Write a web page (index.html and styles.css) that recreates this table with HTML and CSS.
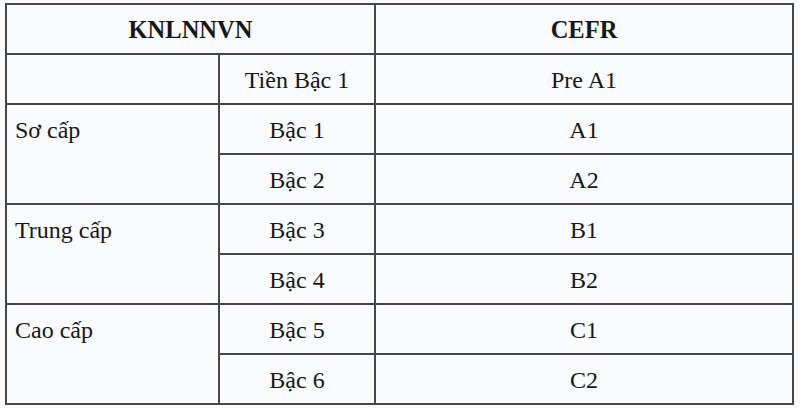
FILE: index.html
```html
<!DOCTYPE html>
<html lang="vi">
<head>
<meta charset="utf-8">
<title>KNLNNVN – CEFR</title>
<link rel="stylesheet" href="styles.css">
</head>
<body>
<table class="levels">
  <colgroup>
    <col class="c1">
    <col class="c2">
    <col class="c3">
  </colgroup>
  <thead>
    <tr>
      <th colspan="2">KNLNNVN</th>
      <th>CEFR</th>
    </tr>
  </thead>
  <tbody>
    <tr>
      <td class="group"></td>
      <td class="mid">Tiền Bậc 1</td>
      <td class="mid">Pre A1</td>
    </tr>
    <tr>
      <td class="group" rowspan="2">Sơ cấp</td>
      <td class="mid">Bậc 1</td>
      <td class="mid">A1</td>
    </tr>
    <tr>
      <td class="mid">Bậc 2</td>
      <td class="mid">A2</td>
    </tr>
    <tr>
      <td class="group" rowspan="2">Trung cấp</td>
      <td class="mid">Bậc 3</td>
      <td class="mid">B1</td>
    </tr>
    <tr>
      <td class="mid">Bậc 4</td>
      <td class="mid">B2</td>
    </tr>
    <tr>
      <td class="group" rowspan="2">Cao cấp</td>
      <td class="mid">Bậc 5</td>
      <td class="mid">C1</td>
    </tr>
    <tr>
      <td class="mid">Bậc 6</td>
      <td class="mid">C2</td>
    </tr>
  </tbody>
</table>
</body>
</html>
```
FILE: styles.css
```css
html, body {
  margin: 0;
  padding: 0;
  background: #fafbfd;
}
body {
  padding: 3px 0 0 5px;
  font-family: "Liberation Serif", "Times New Roman", serif;
  color: #161616;
}
.levels {
  border-collapse: collapse;
  table-layout: fixed;
  width: 787px;
  font-size: 24px;
  line-height: 26px;
}
.c1 { width: 213px; }
.c2 { width: 156px; }
.c3 { width: 418px; }
.levels th,
.levels td {
  border: 2px solid #474747;
  height: 50px;
  box-sizing: border-box;
  padding: 12px 0 10px 0;
  vertical-align: top;
}
.levels th {
  font-size: 24.5px;
  font-weight: bold;
  text-align: center;
}
.levels .mid {
  text-align: center;
}
.levels .group {
  text-align: left;
  padding-left: 8px;
}
```
